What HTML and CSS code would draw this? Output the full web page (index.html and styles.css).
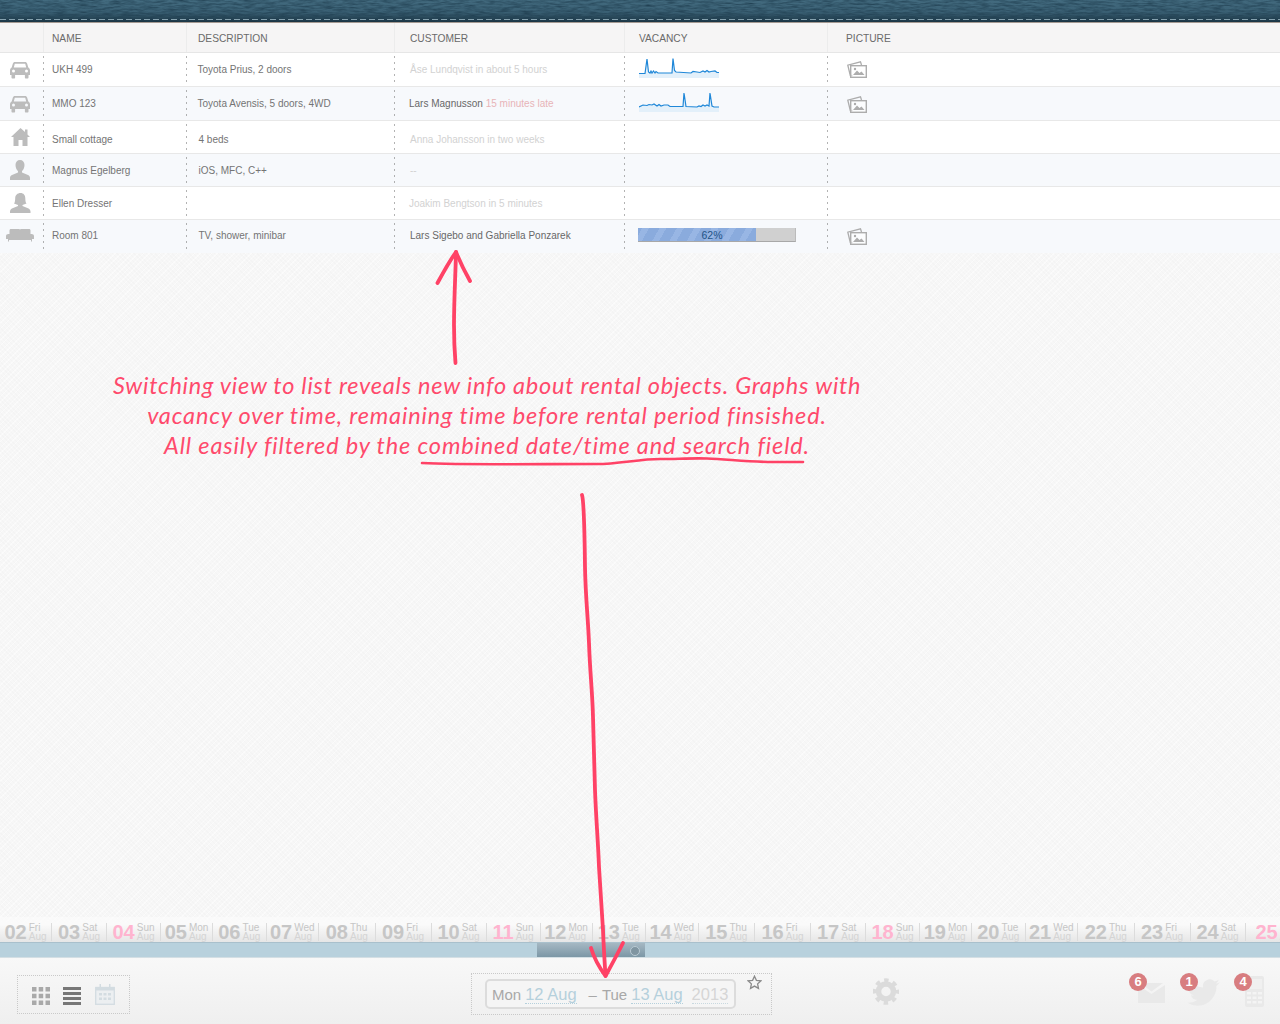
FILE: index.html

```html
<!DOCTYPE html>
<html lang="en">
<head>
  <meta charset="UTF-8">
  <title>Rental objects list</title>
  <link rel="stylesheet" href="styles.css">
</head>
<body>
  <svg class="defs" width="0" height="0">
    <defs>
      <filter id="leather" x="0" y="0" width="100%" height="100%" color-interpolation-filters="sRGB">
        <feTurbulence type="fractalNoise" baseFrequency="0.09 0.55" numOctaves="3" seed="7"/>
        <feColorMatrix type="matrix" values="0 0 0 0 0.12  0 0 0 0 0.24  0 0 0 0 0.31  1.5 0 0 0 -0.5"/>
      </filter>
      <symbol id="car" viewBox="0 0 20 18">
        <path fill-rule="evenodd" d="M5 1h10c1.2 0 1.8.6 2.2 1.8L18.300 6.600C19.400 7.300 20 8.200 20 9.500V14h-1.500v2.500c0 .6-.4 1-1 1h-1.600c-.6 0-1-.4-1-1V14H5.100v2.500c0 .6-.4 1-1 1H2.500c-.6 0-1-.4-1-1V14H0V9.500c0-1.300.6-2.200 1.700-2.900L2.800 2.800C3.200 1.600 3.800 1 5 1zM4.800 2.800L3.800 6.400h12.400l-1-3.600zM3.500 8.600a1.500 1.500 0 1 0 0 3 1.500 1.500 0 0 0 0-3zM16.500 8.600a1.500 1.500 0 1 0 0 3 1.500 1.500 0 0 0 0-3z"/>
      </symbol>
      <symbol id="photos" viewBox="0 0 20 17">
        <path fill="none" stroke="currentColor" stroke-width="1.300" d="M5.500 14.500H3.300L.8 4.200 13.500.9 14.500 4"/>
        <rect x="3.700" y="4.700" width="15.600" height="11.600" fill="#fff" fill-opacity=".6" stroke="currentColor" stroke-width="1.400"/>
        <path fill="currentColor" d="M6 14l4-4.500 2.500 2.500 2-1.500 3 3.500z"/>
        <circle cx="8" cy="8" r="1.200" fill="currentColor"/>
      </symbol>
    </defs>
  </svg>

  <header class="leather">
    <svg class="leather-grain" width="1280" height="22"><rect width="1280" height="22" filter="url(#leather)"/></svg>
  </header>

  <table class="objects">
    <colgroup>
      <col class="col-icon"><col class="col-name"><col class="col-desc"><col class="col-customer"><col class="col-vacancy"><col>
    </colgroup>
    <thead>
      <tr>
        <th></th>
        <th class="cell-name">NAME</th>
        <th class="cell-desc">DESCRIPTION</th>
        <th class="cell-customer">CUSTOMER</th>
        <th class="cell-vacancy">VACANCY</th>
        <th class="cell-picture">PICTURE</th>
      </tr>
    </thead>
    <tbody>
      <tr class="tall">
        <td class="cell-icon"><svg class="type-icon car" width="20" height="18"><use href="#car"/></svg></td>
        <td class="cell-name">UKH 499</td>
        <td class="cell-desc nudge">Toyota Prius, 2 doors</td>
        <td class="cell-customer faded">Åse Lundqvist in about 5 hours</td>
        <td class="cell-vacancy">
          <svg class="spark" width="80" height="22" viewBox="0 0 80 22">
            <path class="spark-fill" d="M0 15.500H6L8 1l1.500 13 1.500 1 1-2 1 2 1.500-2 1.500 2 1-1.500 2 1.500h14l1-14.500 1.500 12 1.500 1.500 15 1 2-1.500 4 .5 3 .5 3-1.500 2 1 2-1.500 2 1.500 2-.5 4-.5 2 1.500h2V20H0z"/>
            <path class="spark-line" d="M0 15.500H6L8 1l1.500 13 1.500 1 1-2 1 2 1.500-2 1.500 2 1-1.500 2 1.500h14l1-14.500 1.500 12 1.500 1.500 15 1 2-1.500 4 .5 3 .5 3-1.500 2 1 2-1.500 2 1.500 2-.5 4-.5 2 1.500h2"/>
          </svg>
        </td>
        <td class="cell-picture"><svg class="photos" width="20" height="17"><use href="#photos"/></svg></td>
      </tr>
      <tr class="tall">
        <td class="cell-icon"><svg class="type-icon car" width="20" height="18"><use href="#car"/></svg></td>
        <td class="cell-name">MMO 123</td>
        <td class="cell-desc nudge">Toyota Avensis, 5 doors, 4WD</td>
        <td class="cell-customer nudge strong">Lars Magnusson <span class="late">15 minutes late</span></td>
        <td class="cell-vacancy">
          <svg class="spark" width="80" height="22" viewBox="0 0 80 22">
            <path class="spark-fill" d="M0 15l4-2 4 .5 2-1 3 .5 2-1 3 2 2-1.500 2 1.500 3-1h4l2 1.500h13L45 1l2 13.500 11 .5 2-1 2 .5 2-1.500 2 1 2-1 2 1L71 1l2 13 2 1h5v5H0z"/>
            <path class="spark-line" d="M0 15l4-2 4 .5 2-1 3 .5 2-1 3 2 2-1.500 2 1.500 3-1h4l2 1.500h13L45 1l2 13.500 11 .5 2-1 2 .5 2-1.500 2 1 2-1 2 1L71 1l2 13 2 1h5"/>
          </svg>
        </td>
        <td class="cell-picture"><svg class="photos photos-low" width="20" height="17"><use href="#photos"/></svg></td>
      </tr>
      <tr class="low">
        <td class="cell-icon">
          <svg class="type-icon house" width="19" height="18" viewBox="0 0 19 18"><path d="M9.500 0l4.500 4V1.500h2.500v5L19 9h-2.500v9H11.500v-6h-4v6H2.500V9H0z"/></svg>
        </td>
        <td class="cell-name">Small cottage</td>
        <td class="cell-desc">4 beds</td>
        <td class="cell-customer faded">Anna Johansson in two weeks</td>
        <td></td><td></td>
      </tr>
      <tr>
        <td class="cell-icon">
          <svg class="type-icon" width="20" height="20" viewBox="0 0 20 20"><path d="M10 0c2.800 0 4.500 2 4.500 5 0 2.500-1 5-2.500 6v1.500l6 2.500c1.300.6 2 1.700 2 3v2H0v-2c0-1.300.7-2.400 2-3l6-2.500V11C6.500 10 5.500 7.500 5.500 5 5.500 2 7.200 0 10 0z"/></svg>
        </td>
        <td class="cell-name">Magnus Egelberg</td>
        <td class="cell-desc">iOS, MFC, C++</td>
        <td class="cell-customer faded">--</td>
        <td></td><td></td>
      </tr>
      <tr>
        <td class="cell-icon">
          <svg class="type-icon" width="21" height="20" viewBox="0 0 21 20"><path d="M10.500 0c3 0 4.800 2.200 4.800 5.200 0 2.600.4 4.300 1.200 5.300l-4 1.500v1l5.500 2.200c1.400.6 2.500 1.800 2.500 3.300V20H0v-1.500C0 17 1.100 15.800 2.500 15.200L8 13v-1l-4-1.500c.8-1 1.200-2.700 1.200-5.300C5.200 2.200 7.500 0 10.500 0z"/></svg>
        </td>
        <td class="cell-name">Ellen Dresser</td>
        <td class="cell-desc"></td>
        <td class="cell-customer faded nudge">Joakim Bengtson in 5 minutes</td>
        <td></td><td></td>
      </tr>
      <tr>
        <td class="cell-icon">
          <svg class="type-icon" width="28" height="14" viewBox="0 0 28 14"><path d="M5 0h8c.6 0 1 .3 1 .8C14 .3 14.400 0 15 0h8c1 0 1.500.6 1.500 1.500V5H25.500c1.500 0 2.500.8 2.500 2v3H26v2.500h-1V11H3v1.500H2V10H0V7c0-1.200 1-2 2.500-2H3.500V1.500C3.500.6 4 0 5 0z"/></svg>
        </td>
        <td class="cell-name">Room 801</td>
        <td class="cell-desc">TV, shower, minibar</td>
        <td class="cell-customer strong">Lars Sigebo and Gabriella Ponzarek</td>
        <td class="cell-vacancy cell-progress">
          <div class="progress">
            <div class="progress-fill" style="width: 75%"></div>
            <span class="progress-label">62%</span>
          </div>
        </td>
        <td class="cell-picture"><svg class="photos" width="20" height="17"><use href="#photos"/></svg></td>
      </tr>
    </tbody>
  </table>

  <main class="spacer"></main>

  <nav class="timeline">
    <div class="day fri"><b>02</b><span>Fri<br><i>Aug</i></span></div>
    <div class="day sat"><b>03</b><span>Sat<br><i>Aug</i></span></div>
    <div class="day sun"><b>04</b><span>Sun<br><i>Aug</i></span></div>
    <div class="day mon"><b>05</b><span>Mon<br><i>Aug</i></span></div>
    <div class="day tue"><b>06</b><span>Tue<br><i>Aug</i></span></div>
    <div class="day wed"><b>07</b><span>Wed<br><i>Aug</i></span></div>
    <div class="day thu"><b>08</b><span>Thu<br><i>Aug</i></span></div>
    <div class="day fri"><b>09</b><span>Fri<br><i>Aug</i></span></div>
    <div class="day sat"><b>10</b><span>Sat<br><i>Aug</i></span></div>
    <div class="day sun"><b>11</b><span>Sun<br><i>Aug</i></span></div>
    <div class="day mon"><b>12</b><span>Mon<br><i>Aug</i></span></div>
    <div class="day tue"><b>13</b><span>Tue<br><i>Aug</i></span></div>
    <div class="day wed"><b>14</b><span>Wed<br><i>Aug</i></span></div>
    <div class="day thu"><b>15</b><span>Thu<br><i>Aug</i></span></div>
    <div class="day fri"><b>16</b><span>Fri<br><i>Aug</i></span></div>
    <div class="day sat"><b>17</b><span>Sat<br><i>Aug</i></span></div>
    <div class="day sun"><b>18</b><span>Sun<br><i>Aug</i></span></div>
    <div class="day mon"><b>19</b><span>Mon<br><i>Aug</i></span></div>
    <div class="day tue"><b>20</b><span>Tue<br><i>Aug</i></span></div>
    <div class="day wed"><b>21</b><span>Wed<br><i>Aug</i></span></div>
    <div class="day thu"><b>22</b><span>Thu<br><i>Aug</i></span></div>
    <div class="day fri"><b>23</b><span>Fri<br><i>Aug</i></span></div>
    <div class="day sat"><b>24</b><span>Sat<br><i>Aug</i></span></div>
    <div class="day sun"><b>25</b><span>Sun<br><i>Aug</i></span></div>
  </nav>

  <div class="slider">
    <div class="slider-handle"><span class="slider-knob"></span></div>
  </div>

  <footer class="toolbar">
    <div class="view-switch">
      <svg width="18" height="18" viewBox="0 0 18 18" class="view-grid">
        <path d="M0 0h4.500v4.500H0zM6.700 0h4.500v4.500H6.700zM13.500 0H18v4.500h-4.500zM0 6.700h4.500v4.500H0zM6.700 6.700h4.500v4.500H6.700zM13.500 6.700H18v4.500h-4.500zM0 13.500h4.500V18H0zM6.700 13.500h4.500V18H6.700zM13.500 13.500H18V18h-4.500z"/>
      </svg>
      <svg width="18" height="18" viewBox="0 0 18 18" class="view-list">
        <path d="M0 0h18v3H0zM0 5h18v3H0zM0 10h18v3H0zM0 15h18v3H0z"/>
      </svg>
      <svg width="20" height="21" viewBox="0 0 20 21" class="view-calendar">
        <rect x=".7" y="3.500" width="18.600" height="16.800" fill="#eceff1" stroke="#d3dce1" stroke-width="1.300"/>
        <path fill="#d3dce1" d="M1 3.500h18v3H1zM4.500 0H6v4H4.500zM14 0h1.500v4H14zM4 9h3v2.500H4zM8.500 9h3v2.500h-3zM13 9h3v2.500h-3zM4 13.500h3V16H4zM8.500 13.500h3V16h-3zM13 13.500h3V16h-3z"/>
      </svg>
    </div>

    <div class="date-box">
      <div class="date-field">
        <span class="date-day">Mon</span>
        <span class="date-link">12 Aug</span>
        <span class="date-dash">–</span>
        <span class="date-day">Tue</span>
        <span class="date-link">13 Aug</span>
        <span class="date-year">2013</span>
      </div>
      <svg class="star" width="15" height="15" viewBox="0 0 15 15"><path d="M7.500 1.200l1.900 4.100 4.500.5-3.300 3.100.9 4.500-4-2.300-4 2.300.9-4.500L1.100 5.800l4.500-.5z"/></svg>
    </div>

    <svg class="gear" width="26" height="27" viewBox="0 0 26 27">
      <circle cx="13" cy="13.500" r="7.500" fill="none" stroke="#dbdbdb" stroke-width="5.500"/>
      <circle cx="13" cy="13.500" r="11.200" fill="none" stroke="#dbdbdb" stroke-width="4" stroke-dasharray="4.400 4.400" stroke-dashoffset="2.200"/>
    </svg>

    <div class="notices">
      <div class="notice notice-mail">
        <svg width="27" height="20" viewBox="0 0 27 20"><path fill="#e9e9e9" d="M0 2l13.500 9L27 2v18H0z"/><path fill="#e9e9e9" d="M2 0h23L13.500 8.500z"/></svg>
        <span class="badge">6</span>
      </div>
      <div class="notice notice-bird">
        <svg width="33" height="27" viewBox="0 0 24 20"><path transform="translate(0 -2)" fill="#e9e9e9" d="M23.950 4.570a10 10 0 0 1-2.820.78 4.960 4.960 0 0 0 2.160-2.720c-.95.55-2 .95-3.120 1.180a4.920 4.920 0 0 0-8.380 4.480C7.690 8.100 4.070 6.130 1.640 3.160a4.820 4.820 0 0 0-.66 2.470c0 1.710.87 3.210 2.190 4.100a4.900 4.900 0 0 1-2.230-.61v.06a4.920 4.920 0 0 0 3.950 4.830 5 5 0 0 1-2.210.08 4.940 4.940 0 0 0 4.600 3.420A9.870 9.870 0 0 1 0 19.540a14 14 0 0 0 7.560 2.210c9.050 0 14-7.500 14-13.980 0-.21 0-.42-.02-.63a9.940 9.940 0 0 0 2.460-2.550z"/></svg>
        <span class="badge">1</span>
      </div>
      <div class="notice notice-phone">
        <svg width="19" height="31" viewBox="0 0 19 31">
          <rect width="19" height="31" rx="2" fill="#e9e9e9"/>
          <rect x="2" y="3" width="15" height="10" fill="#f0f0f0"/>
          <path fill="#f4f4f4" d="M2 16h4v2.500H2zM7.500 16h4v2.500h-4zM13 16h4v2.500h-4zM2 20.500h4V23H2zM7.500 20.500h4V23h-4zM13 20.500h4V23h-4zM2 25h4v2.500H2zM7.500 25h4v2.500h-4zM13 25h4v2.500h-4z"/>
        </svg>
        <span class="badge">4</span>
      </div>
    </div>
  </footer>

  <!-- the hand drawn notes on top of the screenshot -->
  <svg class="scribbles" width="1280" height="1024" viewBox="0 0 1280 1024">
    <path d="M455.500 363c-1-12-1.500-22-1.500-38 0-26 1.500-50 2-73"/>
    <path d="M437.500 283c6-11 12-22 18.500-31 4 10 9 20 14 29"/>
    <path d="M582 495c2 6 2.500 30 3 72 .5 30 3 50 4 76 1 30 3.500 50 4 74 .5 24 1.500 48 2 73 1 28 3 50 4 77 1.500 24 3 45 4 63 .5 14 1.500 30 2.500 46"/>
    <path d="M591 948c3 10 8 19 14.500 28 6-11 12-22 17.500-33"/>
    <path class="thin" d="M422 463c40 2 110 1 175 1 22 0 42-5 63-5 16 0 32-1 47-.5 22 1 44 3.500 66 3.500h30"/>
  </svg>
  <div class="note">
    <p class="note-first">Switching view to list reveals new info about rental objects. Graphs with</p>
    <p>vacancy over time, remaining time before rental period finsished.</p>
    <p>All easily filtered by the combined date/time and search field.</p>
  </div>
</body>
</html>
```

FILE: styles.css

```css
html, body { margin: 0; padding: 0; }
body {
  position: relative;
  width: 1280px;
  height: 1024px;
  overflow: hidden;
  display: flex;
  flex-direction: column;
  font-family: "Liberation Sans", Arial, sans-serif;
  color: #747474;
  background-color: #f7f7f7;
  background-image:
    repeating-linear-gradient(45deg, rgba(0,0,0,0.012) 0 1px, transparent 1px 3px),
    repeating-linear-gradient(-45deg, rgba(255,255,255,0.5) 0 1px, transparent 1px 4px);
}
.defs { position: absolute; }

/* leather strip */
.leather {
  position: relative;
  flex: none;
  height: 22px;
  background: linear-gradient(to bottom, #436b7f, #3a6074 55%, #223f4f 90%, #1a3240);
  border-bottom: 1px solid #a59a92;
}
.leather-grain { display: block; }
.leather::after {
  content: "";
  position: absolute;
  left: 0;
  right: 0;
  top: 19px;
  height: 1px;
  background: repeating-linear-gradient(to right, #86a2af 0 6px, transparent 6px 9px);
}

/* table */
.objects {
  flex: none;
  width: 1280px;
  border-collapse: collapse;
  table-layout: fixed;
  font-size: 10px;
}
.col-icon { width: 43px; }
.col-name { width: 143px; }
.col-desc { width: 208px; }
.col-customer { width: 230px; }
.col-vacancy { width: 203px; }
.objects th {
  height: 28px;
  padding: 1px 0 0;
  text-align: left;
  font-size: 10.200px;
  font-weight: normal;
  background: #f6f5f5;
  color: #6a6a6a;
  border-bottom: 1px solid #e6e6e6;
  box-shadow: inset 1px 0 0 #ececec;
}
.objects th:first-child { box-shadow: none; }
.objects td {
  height: 32px;
  padding: 0;
  background-image: linear-gradient(to bottom, #666 1px, transparent 1px);
  background-size: 1px 6px;
  background-repeat: repeat-y;
  background-position: 0 3px;
  border-bottom: 1px solid #e8e8e8;
}
.objects td:first-child { background-image: none; }
.objects tr.tall td { height: 33px; }
.objects tbody tr:nth-child(odd) { background: #fff; }
.objects tbody tr:nth-child(even) { background: #f7f9fc; }
.objects tbody tr:last-child td { border-bottom: none; height: 31px; padding-bottom: 2px; }
.objects tr.low td { padding-top: 5px; height: 27px; }
.objects th.cell-name, .objects td.cell-name { padding-left: 9px; }
.objects th.cell-desc { padding-left: 12px; }
.objects td.cell-desc { padding-left: 12.500px; }
.objects th.cell-customer, .objects td.cell-customer { padding-left: 16px; }
.objects th.cell-vacancy, .objects td.cell-vacancy { padding-left: 15px; }
.objects th.cell-picture { padding-left: 19px; }
.objects td.cell-picture { padding-left: 20px; }
.objects td.nudge { padding-left: 11.500px; }
.objects td.cell-customer.nudge { padding-left: 15px; }

.objects td.cell-icon { text-align: center; padding-right: 3px; }
.objects tr.low td.cell-icon { padding-top: 0; height: 32px; }
.type-icon { display: inline-block; vertical-align: middle; fill: #bcbcbc; }
.car { color: #bcbcbc; }
.objects td.faded { color: #d2d2d2; }
.objects td.strong { color: #686868; }
.late { color: #e8b4b8; }

.spark { display: block; margin-bottom: 1px; }
.spark-line { fill: none; stroke: #1f87d8; stroke-width: 1.200; }
.spark-fill { fill: #e3f0fa; stroke: none; }
.photos { display: block; color: #adadad; margin-top: -1px; }
.photos-low { margin-top: 1px; }
.objects tbody tr:last-child .photos { margin-top: 1px; }

.progress {
  position: relative;
  width: 158px;
  height: 14px;
  margin-bottom: 1px;
  background: #d0d0d0;
  border-bottom: 1px solid #a8a8a8;
  border-right: 1px solid #bbb;
  box-sizing: border-box;
}
.objects td.cell-progress { padding-left: 14px; }
.progress-fill {
  height: 100%;
  background-color: #8fb0e0;
  background-image: repeating-linear-gradient(-60deg, #8aabdd 0 9px, #98b6e4 9px 15px);
}
.progress-label {
  position: absolute;
  left: 0;
  top: 0;
  width: 148px;
  text-align: center;
  line-height: 14px;
  font-size: 10.500px;
  color: #1f5488;
}

.spacer { flex: 1; }

/* date ruler */
.timeline {
  flex: none;
  display: flex;
  height: 25px;
  overflow: hidden;
  background: linear-gradient(to bottom, rgba(252,252,252,0.6), #fafafa 30%, #e6e6e6);
  border-bottom: 1px solid #a9c0cc;
  box-sizing: content-box;
}
.day {
  flex: none;
  box-sizing: border-box;
  display: flex;
  justify-content: center;
  align-items: center;
  gap: 2px;
  height: 18px;
  margin-top: 6px;
  border-right: 1px solid #dcdcdc;
  color: #c6c6c6;
}
.day:first-child { width: 52px; }
.day:last-child { width: 60px; justify-content: flex-start; padding-left: 10px; border-right: none; }
.day b { font-size: 20px; line-height: 18px; }
.day span { font-size: 10px; line-height: 9px; white-space: nowrap; }
.day i { font-style: normal; color: #d4d4d4; }
.mon { width: 52px; }
.tue { width: 53.500px; }
.wed { width: 52.500px; }
.thu { width: 56.500px; }
.fri { width: 56px; }
.sat { width: 55px; }
.sun { width: 54px; }
.sun b { color: #ffb4cf; }

.slider {
  flex: none;
  height: 14px;
  background: #b8d1dd;
  border-bottom: 1px solid #d4dfe4;
  padding-left: 537px;
}
.slider-handle {
  position: relative;
  width: 108px;
  height: 14px;
  background: linear-gradient(to bottom, #a5b8c3, #7c97a6);
}
.slider-knob {
  position: absolute;
  right: 5px;
  top: 3px;
  width: 8px;
  height: 8px;
  border-radius: 50%;
  background: #7f95a1;
  border: 1px solid #b9cad3;
}

/* bottom bar */
.toolbar {
  flex: none;
  height: 66px;
  display: flex;
  align-items: flex-start;
  padding-left: 17px;
  background: linear-gradient(to bottom, #f8f8f8, #efefef);
}
.view-switch {
  box-sizing: border-box;
  width: 113px;
  height: 39px;
  margin-top: 17px;
  border: 1px dotted #c9c9c9;
  display: flex;
  align-items: center;
  padding: 2px 0 0 14px;
}
.view-grid { fill: #a9a9a9; margin-right: 13px; }
.view-list { fill: #777; margin-right: 14px; }
.view-calendar { margin-top: -2px; }

.date-box {
  box-sizing: border-box;
  position: relative;
  width: 301px;
  height: 42px;
  margin: 15px 0 0 341px;
  padding: 5px 0 0 13px;
  border: 1px dotted #c9c9c9;
}
.date-field {
  box-sizing: border-box;
  width: 251px;
  height: 30px;
  border: 2px solid #dcdcdc;
  border-radius: 5px;
  background: #f5f5f5;
  display: flex;
  align-items: center;
  gap: 4px;
  padding: 1px 0 0 5px;
  font-size: 15px;
  white-space: nowrap;
}
.date-day { color: #a8a8a8; }
.date-link {
  font-size: 16.500px;
  color: #b5d0dc;
  border-bottom: 1px dotted #b5d0dc;
  line-height: 17px;
}
.date-dash { color: #a8a8a8; margin: 0 1px 0 8px; }
.date-year {
  font-size: 16.500px;
  color: #d6d6d6;
  border-bottom: 1px dotted #c9d9e0;
  line-height: 17px;
  margin-left: 5px;
}
.star {
  position: absolute;
  right: 9px;
  top: 1px;
  fill: none;
  stroke: #8a8a8a;
  stroke-width: 1.300;
}

.gear { margin: 20px 0 0 101px; }

.notices { display: flex; align-items: flex-start; }
.notice { position: relative; }
.notice svg { display: block; }
.notice-mail { margin: 25px 0 0 239px; }
.notice-bird { margin: 21px 0 0 22px; }
.notice-phone { margin: 18px 0 0 25px; }
.badge {
  position: absolute;
  top: -10px;
  left: -9px;
  width: 18px;
  height: 18px;
  border-radius: 50%;
  background: #d87d80;
  color: #fff;
  font-size: 13px;
  font-weight: bold;
  line-height: 18px;
  text-align: center;
}
.notice-bird .badge { top: -6px; left: -7px; }
.notice-phone .badge { top: -3px; left: -11px; }

/* annotations */
.scribbles {
  position: absolute;
  left: 0;
  top: 0;
  pointer-events: none;
  fill: none;
  stroke: #ff4266;
  stroke-width: 3.800;
  stroke-linecap: round;
  stroke-linejoin: round;
}
.scribbles .thin { stroke-width: 2.600; }
.note {
  position: absolute;
  left: 113px;
  top: 370px;
  width: 748px;
  font-family: "Lato", "Liberation Sans", sans-serif;
  font-style: italic;
  font-size: 23.500px;
  line-height: 30px;
  letter-spacing: 0.850px;
  color: #ff4a6c;
  text-align: center;
  white-space: nowrap;
}
.note p { margin: 0; }
.note .note-first { letter-spacing: 0.750px; }
```
